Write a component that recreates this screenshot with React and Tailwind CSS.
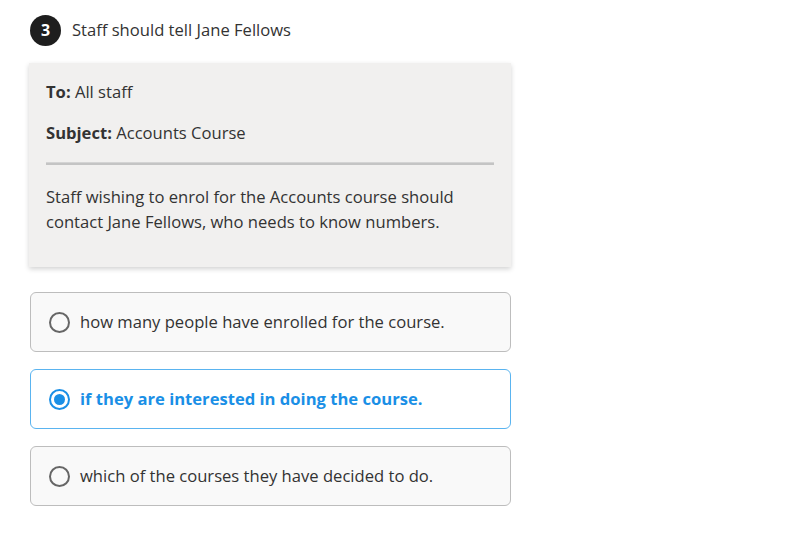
export default function App() {
  const options = [
    { text: "how many people have enrolled for the course.", selected: false },
    { text: "if they are interested in doing the course.", selected: true },
    { text: "which of the courses they have decided to do.", selected: false },
  ];
  return (
    <div className="w-[793px] h-[534px] bg-white text-[#333] text-[16.6px]" style={{ fontFamily: '"Open Sans", sans-serif' }}>
      <div className="pl-[30px] pt-[15px] w-[511px]">
        <div className="flex items-center gap-[11px] h-[30px]">
          <div className="w-[31px] h-[31px] rounded-full bg-[#1e1e1e] text-white flex items-center justify-center font-bold text-[16px]">3</div>
          <div className="text-[16.6px] text-[#333]">Staff should tell Jane Fellows</div>
        </div>
        <div className="mt-[18px] -ml-px bg-[#f1f0ef] shadow-[0_2px_5px_rgba(0,0,0,0.18)] px-[17px] pt-[17px] pb-[33px] leading-[24px]">
          <p><span className="font-bold">To:</span> All staff</p>
          <p className="mt-[17px]"><span className="font-bold">Subject:</span> Accounts Course</p>
          <div className="mt-[17px] h-[3px] bg-[#c4c4c4] border-t border-[#d4d4d4]"></div>
          <p className="mt-[19px] leading-[25px]">Staff wishing to enrol for the Accounts course should contact Jane Fellows, who needs to know numbers.</p>
        </div>
        <div className="mt-[25px] flex flex-col gap-[17px]">
          {options.map((o, i) => (
            <div
              key={i}
              className={
                o.selected
                  ? "h-[60px] rounded-[6px] border border-[#5ab4f0] bg-white flex items-center pl-[18px] gap-[10px]"
                  : "h-[60px] rounded-[6px] border border-[#bdbdbd] bg-[#f9f9f9] flex items-center pl-[18px] gap-[10px]"
              }
            >
              {o.selected ? (
                <div className="w-[21px] h-[21px] rounded-full border-[2px] border-[#1a8fe6] flex items-center justify-center">
                  <div className="w-[11px] h-[11px] rounded-full bg-[#1a8fe6]"></div>
                </div>
              ) : (
                <div className="w-[21px] h-[21px] rounded-full border-[2px] border-[#666]"></div>
              )}
              <span className={o.selected ? "font-bold text-[#1a8fe6]" : "text-[#333]"}>{o.text}</span>
            </div>
          ))}
        </div>
      </div>
    </div>
  );
}
